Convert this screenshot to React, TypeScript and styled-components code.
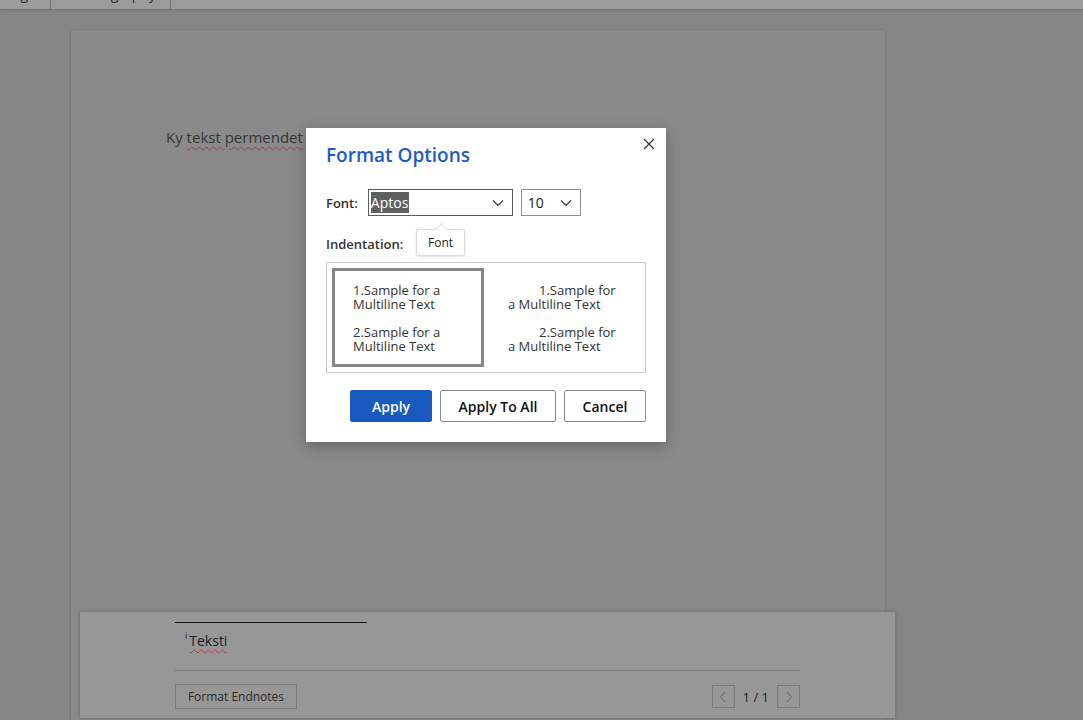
import React from 'react'
import styled, { createGlobalStyle } from 'styled-components'

const GlobalStyle = createGlobalStyle`
  html, body {
    margin: 0;
    padding: 0;
    overflow: hidden;
  }
  body {
    font-family: "Segoe UI", "Open Sans", "Noto Sans", sans-serif;
  }
`

const Shell = styled.div`
  display: flex;
  flex-direction: column;
  width: 1083px;
  height: 720px;
  overflow: hidden;
  background-color: #858585;
`

const Toolbar = styled.div`
  display: flex;
  align-items: flex-end;
  height: 9px;
  flex-shrink: 0;
  overflow: hidden;
  background-color: #9b9b9b;
  box-shadow: 0 1px 2px rgba(0, 0, 0, 0.18);
  position: relative;
  z-index: 1;
`

const ToolbarItem = styled.div<{ $width: number }>`
  width: ${p => p.$width}px;
  height: 9px;
  display: flex;
  align-items: flex-end;
  justify-content: flex-end;
  padding-right: 14px;
  box-sizing: border-box;
  border-right: 1px solid #707070;
  font-size: 14px;
  line-height: 14px;
  color: #2a2a2a;
  overflow: hidden;

  span {
    margin-bottom: 8px;
  }
`

const Workspace = styled.div`
  position: relative;
  flex: 1;
  padding: 20px 0 0 70px;
  overflow: hidden;
`

const Page = styled.div`
  width: 816px;
  height: 760px;
  box-sizing: border-box;
  border: 1px solid #7b7b7b;
  border-radius: 4px;
  background-color: #8a8a8a;
  padding: 97px 0 0 95px;
`

const BodyText = styled.p`
  margin: 0;
  font-size: 15px;
  color: #363636;
  white-space: nowrap;
`

const Misspelled = styled.span`
  text-decoration: underline wavy #a34444;
  text-decoration-thickness: 1px;
  text-underline-offset: 3px;
`

const EndnotePanel = styled.div`
  position: absolute;
  left: 79px;
  top: 602px;
  width: 817px;
  height: 108px;
  box-sizing: border-box;
  background-color: #979797;
  border: 1px solid #7c7c7c;
  box-shadow: 0 0 3px rgba(0, 0, 0, 0.15);
  padding: 10px 95px 0 95px;
  display: flex;
  flex-direction: column;
`

const Separator = styled.div<{ $width: string; $color: string }>`
  width: ${p => p.$width};
  height: 1px;
  background-color: ${p => p.$color};
`

const Endnote = styled.div`
  height: 47px;
  padding: 6px 0 0 10px;
  box-sizing: border-box;
  font-size: 14px;
  color: #1e1e1e;

  sup {
    font-size: 9px;
    margin-right: 2px;
    vertical-align: 7px;
  }
`

const EndnoteFooter = styled.div`
  display: flex;
  align-items: center;
  justify-content: space-between;
  padding-top: 13px;
`

const GhostButton = styled.button`
  width: 122px;
  height: 25px;
  padding: 0;
  background: transparent;
  border: 1px solid #7a7a7a;
  font-family: inherit;
  font-size: 12px;
  color: #2a2a2a;
`

const Pager = styled.div`
  display: flex;
  align-items: center;
  gap: 8px;
  font-size: 13px;
  color: #1e1e1e;
`

const PagerButton = styled.div`
  width: 23px;
  height: 23px;
  box-sizing: border-box;
  border: 1px solid #7c7c7c;
  display: flex;
  align-items: center;
  justify-content: center;
`

const Dialog = styled.div`
  position: absolute;
  left: 306px;
  top: 119px;
  width: 360px;
  box-sizing: border-box;
  background-color: #ffffff;
  box-shadow: 0 4px 14px rgba(0, 0, 0, 0.28);
  padding: 14px 20px 20px 20px;
  display: flex;
  flex-direction: column;
`

const DialogHeader = styled.div`
  display: flex;
  align-items: flex-start;
  justify-content: space-between;
`

const Title = styled.h2`
  margin: 0;
  font-size: 19px;
  font-weight: 600;
  color: #1d5cc0;
  line-height: 26px;
`

const CloseButton = styled.div`
  width: 12px;
  height: 12px;
  margin: -4px -9px 0 0;
  display: flex;
`

const FieldRow = styled.div`
  display: flex;
  align-items: center;
  margin-top: 21px;
  gap: 8px;
`

const Label = styled.span<{ $gap?: number }>`
  font-size: 13px;
  font-weight: 600;
  color: #333333;
  margin-right: ${p => p.$gap ?? 0}px;
`

const Select = styled.div<{ $width: number; $border: string }>`
  width: ${p => p.$width}px;
  height: 27px;
  box-sizing: border-box;
  border: 1px solid ${p => p.$border};
  display: flex;
  align-items: center;
  justify-content: space-between;
  padding: 0 8px 0 2px;
  font-size: 14px;
  color: #222222;
`

const Highlight = styled.span`
  background-color: #5f5f5f;
  color: #ffffff;
  line-height: 21px;
  padding-right: 1px;
`

const PlainValue = styled.span`
  padding-left: 4px;
`

const IndentRow = styled.div`
  position: relative;
  margin-top: 16px;
`

const Tooltip = styled.div`
  position: absolute;
  left: 90px;
  top: -3px;
  width: 49px;
  height: 27px;
  box-sizing: border-box;
  background: #ffffff;
  border: 1px solid #dddddd;
  border-radius: 2px;
  box-shadow: 0 1px 3px rgba(0, 0, 0, 0.12);
  display: flex;
  align-items: center;
  justify-content: center;
  font-size: 12px;
  color: #222222;

  &::before {
    content: '';
    position: absolute;
    top: -5px;
    left: 20px;
    width: 8px;
    height: 8px;
    background: #ffffff;
    border-left: 1px solid #dddddd;
    border-top: 1px solid #dddddd;
    transform: rotate(45deg);
  }
`

const OptionsBox = styled.div`
  margin-top: 8px;
  border: 1px solid #cccccc;
  padding: 5px;
  display: grid;
  grid-template-columns: 152px 1fr;
  gap: 10px;
`

const Option = styled.div<{ $selected?: boolean }>`
  height: 99px;
  box-sizing: border-box;
  border: 3px solid ${p => (p.$selected ? '#878787' : 'transparent')};
  padding: 12px 0 0 ${p => (p.$selected ? 18 : 11)}px;
  display: flex;
  flex-direction: column;
  gap: 14px;
`

const SampleText = styled.div<{ $indent: number; $width: number }>`
  width: ${p => p.$width}px;
  font-size: 13px;
  line-height: 14px;
  color: #333333;
  text-indent: ${p => p.$indent}px;
`

const Actions = styled.div`
  display: flex;
  justify-content: flex-end;
  gap: 8px;
  margin-top: 17px;
`

const Button = styled.button<{ $primary?: boolean; $width: number }>`
  width: ${p => p.$width}px;
  height: 32px;
  box-sizing: border-box;
  border: 1px solid ${p => (p.$primary ? '#185abd' : '#8a8a8a')};
  border-radius: 2px;
  background-color: ${p => (p.$primary ? '#185abd' : '#ffffff')};
  color: ${p => (p.$primary ? '#ffffff' : '#111111')};
  font-family: inherit;
  font-size: 14px;
  font-weight: 600;
`

const Chevron = ({ color = '#333' }: { color?: string }) => (
  <svg width="12" height="8" viewBox="0 0 12 8">
    <path d="M1 1.5 L6 6.5 L11 1.5" fill="none" stroke={color} strokeWidth="1.1" />
  </svg>
)

export default function App() {
  return (
    <>
      <GlobalStyle />
      <Shell>
        <Toolbar>
          <ToolbarItem $width={51}>
            <span>Page</span>
          </ToolbarItem>
          <ToolbarItem $width={120}>
            <span>Bibliography</span>
          </ToolbarItem>
        </Toolbar>
        <Workspace>
          <Page>
            <BodyText>
              Ky <Misspelled>tekst permendet</Misspelled> <Misspelled>tekstin</Misspelled> e fundit
            </BodyText>
          </Page>

          <EndnotePanel>
            <Separator $width="192px" $color="#111111" />
            <Endnote>
              <sup>i</sup>
              <Misspelled>Teksti</Misspelled>
            </Endnote>
            <Separator $width="100%" $color="#7a7a7a" />
            <EndnoteFooter>
              <GhostButton>Format Endnotes</GhostButton>
              <Pager>
                <PagerButton>
                  <svg width="8" height="12" viewBox="0 0 8 12">
                    <path d="M6 1 L1.5 6 L6 11" fill="none" stroke="#707070" strokeWidth="1.1" />
                  </svg>
                </PagerButton>
                <span>1 / 1</span>
                <PagerButton>
                  <svg width="8" height="12" viewBox="0 0 8 12">
                    <path d="M2 1 L6.5 6 L2 11" fill="none" stroke="#707070" strokeWidth="1.1" />
                  </svg>
                </PagerButton>
              </Pager>
            </EndnoteFooter>
          </EndnotePanel>

          <Dialog>
            <DialogHeader>
              <Title>Format Options</Title>
              <CloseButton>
                <svg width="12" height="12" viewBox="0 0 12 12">
                  <path d="M1 1 L11 11 M11 1 L1 11" stroke="#333" strokeWidth="1.2" />
                </svg>
              </CloseButton>
            </DialogHeader>

            <FieldRow>
              <Label $gap={2}>Font:</Label>
              <Select $width={145} $border="#5a5a5a">
                <Highlight>Aptos</Highlight>
                <Chevron />
              </Select>
              <Select $width={60} $border="#8e8e8e">
                <PlainValue>10</PlainValue>
                <Chevron />
              </Select>
            </FieldRow>

            <IndentRow>
              <Label>Indentation:</Label>
              <Tooltip>Font</Tooltip>
            </IndentRow>

            <OptionsBox>
              <Option $selected>
                <SampleText $indent={0} $width={110}>
                  1.Sample for a Multiline Text
                </SampleText>
                <SampleText $indent={0} $width={110}>
                  2.Sample for a Multiline Text
                </SampleText>
              </Option>
              <Option>
                <SampleText $indent={31} $width={112}>
                  1.Sample for a Multiline Text
                </SampleText>
                <SampleText $indent={31} $width={112}>
                  2.Sample for a Multiline Text
                </SampleText>
              </Option>
            </OptionsBox>

            <Actions>
              <Button $primary $width={82}>Apply</Button>
              <Button $width={116}>Apply To All</Button>
              <Button $width={82}>Cancel</Button>
            </Actions>
          </Dialog>
        </Workspace>
      </Shell>
    </>
  )
}
